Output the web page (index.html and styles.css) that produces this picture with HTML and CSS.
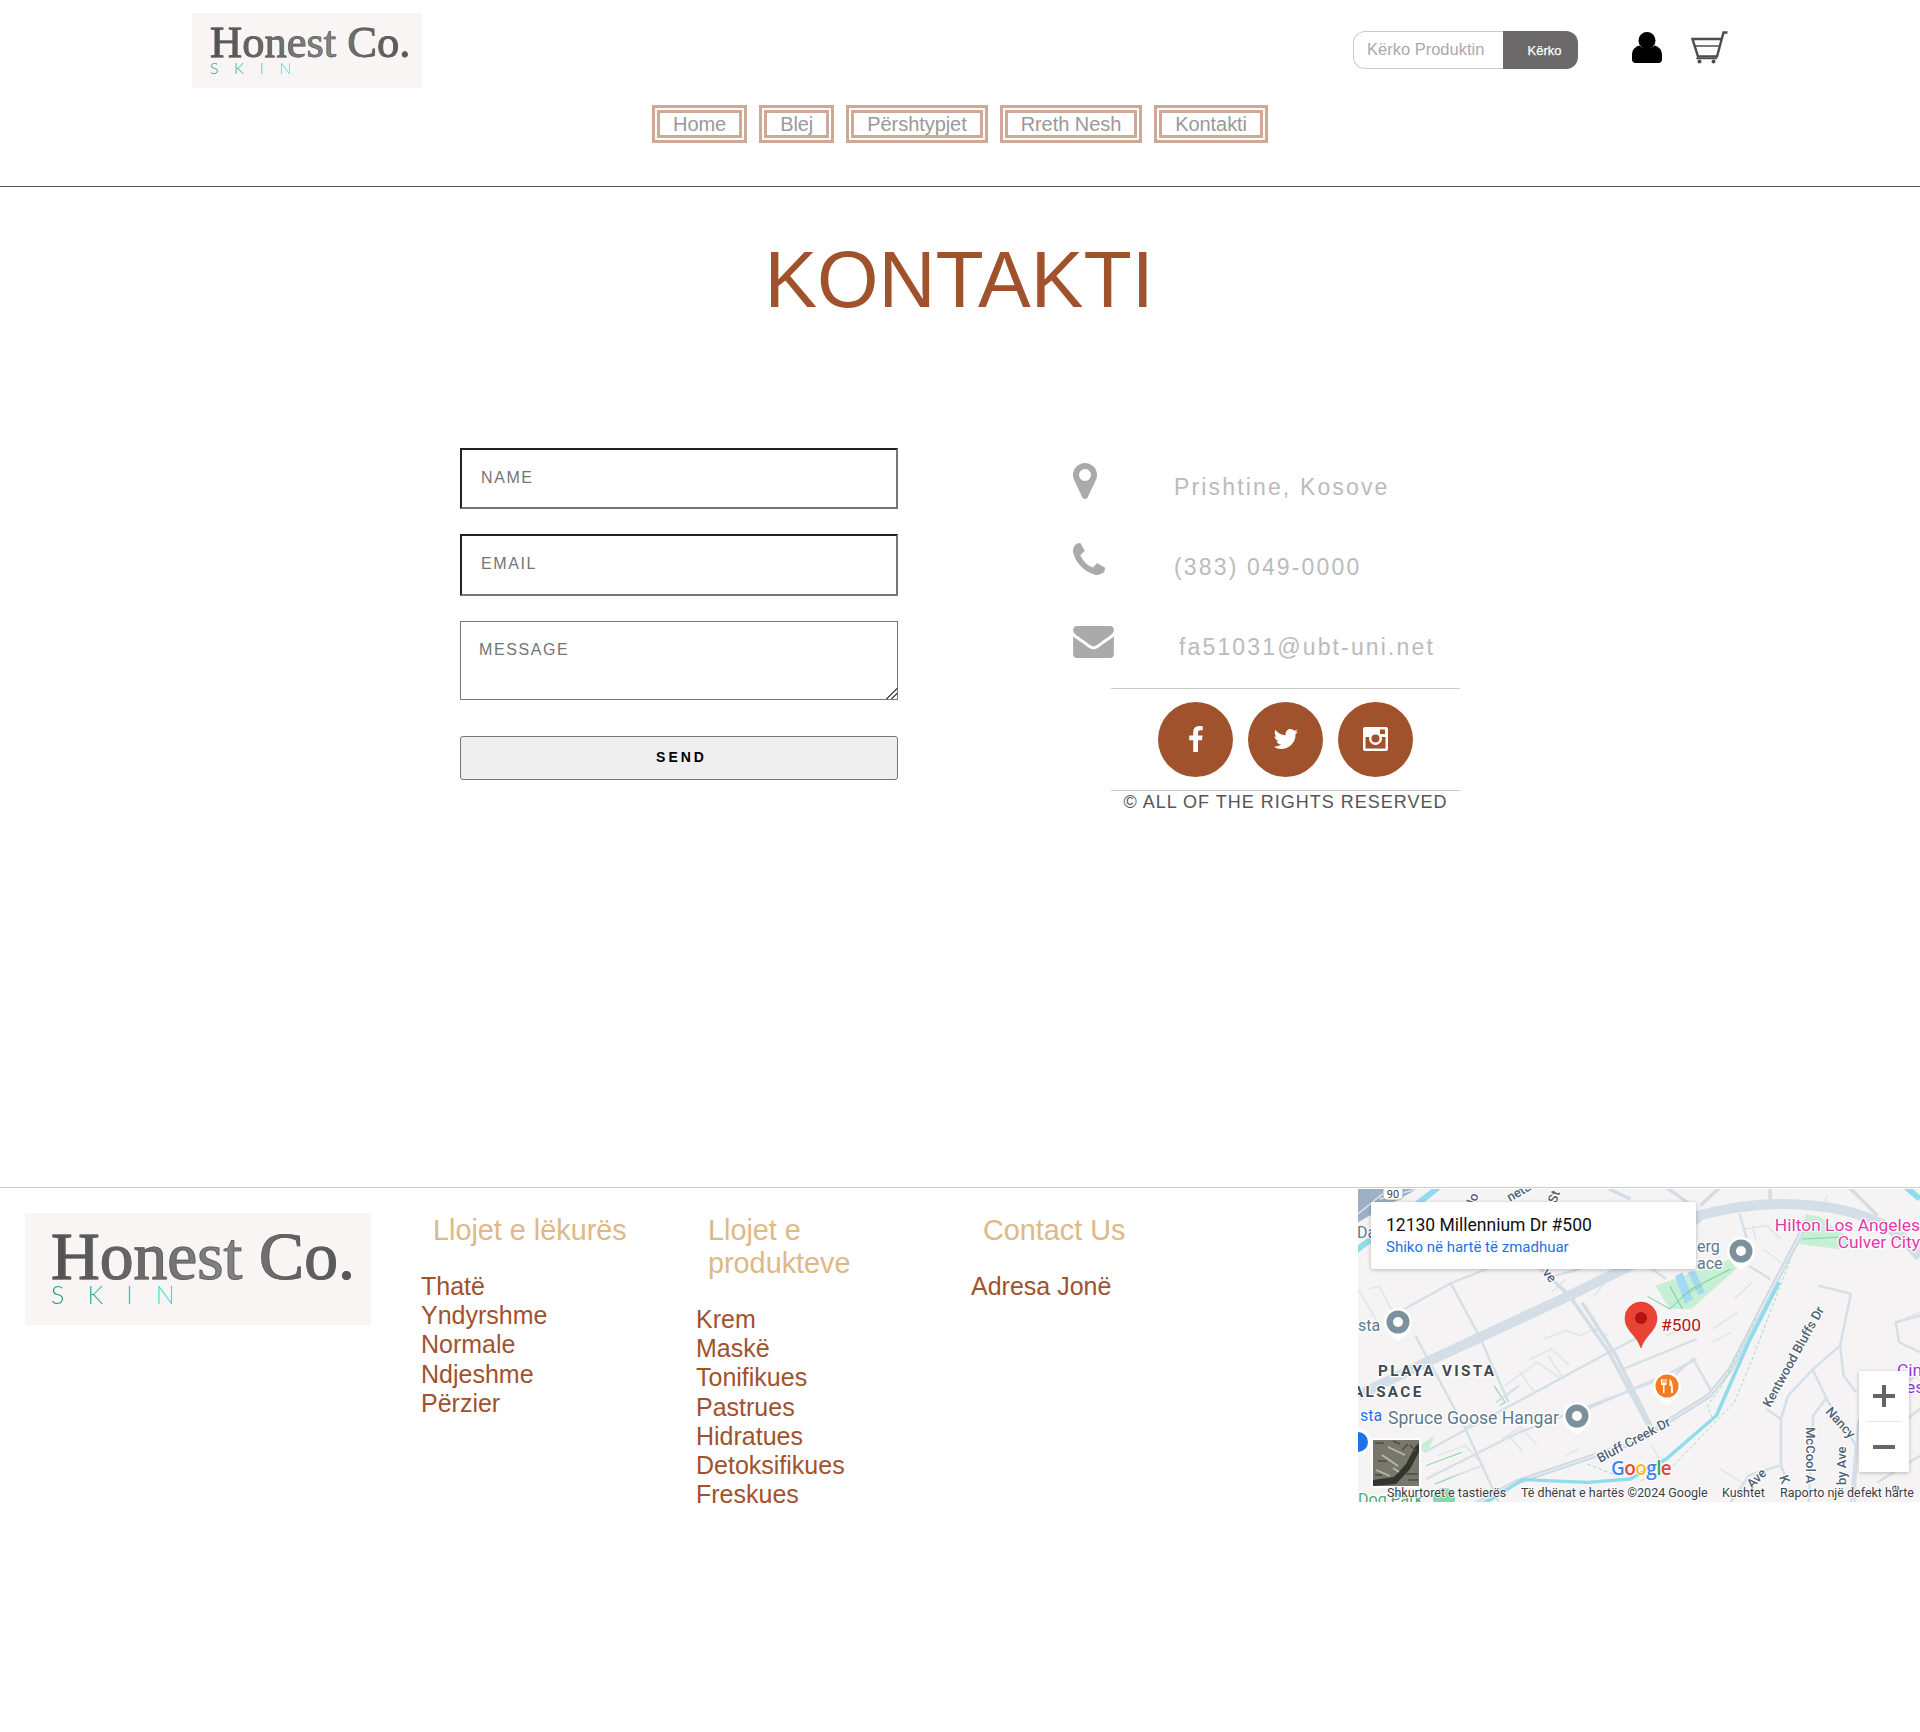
FILE: index.html
```html
<!DOCTYPE html>
<html lang="sq">
<head>
<meta charset="utf-8">
<title>Kontakti</title>
<link rel="stylesheet" href="styles.css">
</head>
<body>
<header class="site-header">
  <div class="top-row">
    <div class="logo logo-small">
      <div class="logo-name">Honest Co.</div>
      <div class="logo-sub">SKIN</div>
    </div>
    <form class="search">
      <input class="search-input" type="text" placeholder="Kërko Produktin">
      <button class="search-btn" type="button">Kërko</button>
    </form>
    <svg class="icon-user" viewBox="0 0 30 31"><circle cx="15" cy="8.5" r="8.5"/><path d="M7.5 13.5C10 17 20 17 22.500 13.500C27 14.500 30 18 30 23V27.500C30 29.500 28.500 31 26.500 31H3.500C1.500 31 0 29.500 0 27.500V23C0 18 3 14.500 7.500 13.500Z"/></svg>
    <svg class="icon-cart" viewBox="0 0 37 33"><path class="cart-line" d="M36.500 1.500H32.500L26 25.500H7L1.500 8H31"/><path class="cart-thin" d="M4 15H28.500M7 25.500L6 27.500H26"/><circle class="cart-wheel" cx="8.500" cy="30.500" r="2"/><circle class="cart-wheel" cx="22.500" cy="30.500" r="2"/></svg>
  </div>
  <nav class="main-nav">
    <a class="nav-link" href="#">Home</a>
    <a class="nav-link" href="#">Blej</a>
    <a class="nav-link" href="#">Përshtypjet</a>
    <a class="nav-link" href="#">Rreth Nesh</a>
    <a class="nav-link" href="#">Kontakti</a>
  </nav>
</header>

<main class="contact-page">
  <h1 class="page-title">KONTAKTI</h1>
  <div class="contact-body">
    <form class="contact-form">
      <input class="field field-name" type="text" placeholder="NAME">
      <input class="field field-email" type="text" placeholder="EMAIL">
      <textarea class="field-message" placeholder="MESSAGE"></textarea>
      <button class="send-btn" type="button">SEND</button>
    </form>
    <div class="contact-info">
      <div class="info-row">
        <div class="info-icon"><svg class="i-pin" viewBox="384 128 1024 1536"><path d="M1152 640q0-106-75-181t-181-75-181 75-75 181 75 181 181 75 181-75 75-181zm256 0q0 109-33 179l-364 774q-16 33-47.5 52t-67.5 19-67.5-19-46.5-52l-365-774q-33-70-33-179 0-212 150-362t362-150 362 150 150 362z"/></svg></div>
        <span class="info-text">Prishtine, Kosove</span>
      </div>
      <div class="info-row">
        <div class="info-icon"><svg class="i-phone" viewBox="192 128 1408 1408"><path d="M1600 1240q0 27-10 70.500t-21 68.500q-21 50-122 106-94 51-186 51-27 0-53-3.500t-57.500-12.500-47-14.500-55.500-20.500-49-18q-98-35-175-83-127-79-264-216t-216-264q-48-77-83-175-3-9-18-49t-20.500-55.500-14.500-47-12.500-57.500-3.500-53q0-92 51-186 56-101 106-122 25-11 68.500-21t70.500-10q14 0 21 3 18 6 53 76 11 19 30 54t35 63.500 31 53.500q3 4 17.500 25t21.500 35.500 7 28.500q0 20-28.500 50t-62 55-62 53-28.500 46q0 9 5 22.500t8.500 20.500 14 24 11.500 19q76 137 174 235t235 174q2 1 19 11.500t24 14 20.500 8.500 22.500 5q18 0 46-28.500t53-62 55-62 50-28.500q14 0 28.500 7t35.500 21.500 25 17.500q25 15 53.500 31t63.500 35 54 30q70 35 76 53 3 7 3 21z"/></svg></div>
        <span class="info-text">(383) 049-0000</span>
      </div>
      <div class="info-row info-row-last">
        <div class="info-icon"><svg class="i-mail" viewBox="0 256 1792 1408"><path d="M1792 710v794q0 66-47 113t-113 47h-1472q-66 0-113-47t-47-113v-794q44 49 101 87 362 246 497 345 57 42 92.500 65.500t94.500 48 110 24.500h2q51 0 110-24.500t94.500-48 92.500-65.500q170-123 498-345 57-39 100-87zm0-294q0 79-49 151t-122 123q-376 261-468 325-10 7-42.500 30.500t-54 38-52 32.500-57.500 27-50 9h-2q-23 0-50-9t-57.500-27-52-32.500-54-38-42.500-30.500q-91-64-262-182.500t-205-142.500q-62-42-117-115.500t-55-136.500q0-78 41.500-130t118.500-52h1472q65 0 112.500 47t47.500 113z"/></svg></div>
        <span class="info-text info-text-mail">fa51031@ubt-uni.net</span>
      </div>
      <div class="social">
        <a class="social-btn" href="#"><svg class="s-fb" viewBox="479 0 864 1664"><path d="M1343 12v264h-157q-86 0-116 36t-30 108v189h293l-39 296h-254v759h-306v-759h-255v-296h255v-218q0-186 104-288.500t277-102.500q147 0 228 12z"/></svg></a>
        <a class="social-btn" href="#"><svg class="s-tw" viewBox="64 256 1620 1280"><path d="M1684 408q-67 98-162 167 1 14 1 42 0 130-38 259.500t-115.500 248.500-184.500 210.500-258 146-323 54.500q-271 0-496-145 35 4 78 4 225 0 401-138-105-2-188-64.500t-114-159.500q33 5 61 5 43 0 85-11-112-23-185.500-111.500t-73.500-205.500v-4q68 38 146 41-66-44-105-115t-39-154q0-88 44-163 121 149 294.500 238.500t371.500 99.500q-8-38-8-74 0-134 94.500-228.500t228.500-94.500q140 0 236 102 109-21 205-78-37 115-142 178 92-10 184-50z"/></svg></a>
        <a class="social-btn" href="#"><svg class="s-ig" viewBox="0 0 25 24"><rect class="ig-white" width="25" height="24" rx="2"/><rect class="ig-brown" x="2.500" y="10" width="20" height="11.500"/><circle class="ig-white" cx="12.500" cy="11.500" r="6.500"/><circle class="ig-brown" cx="12.500" cy="11.500" r="4"/><rect class="ig-brown" x="17" y="2.500" width="5" height="4.500"/></svg></a>
      </div>
      <p class="rights">© ALL OF THE RIGHTS RESERVED</p>
    </div>
  </div>
</main>

<footer class="site-footer">
  <div class="logo logo-large">
    <div class="logo-name">Honest Co.</div>
    <div class="logo-sub">SKIN</div>
  </div>
  <section class="foot-col foot-col-first">
    <h3 class="foot-title">Llojet e lëkurës</h3>
    <ul class="foot-list">
      <li>Thatë</li><li>Yndyrshme</li><li>Normale</li><li>Ndjeshme</li><li>Përzier</li>
    </ul>
  </section>
  <section class="foot-col">
    <h3 class="foot-title">Llojet e produkteve</h3>
    <ul class="foot-list">
      <li>Krem</li><li>Maskë</li><li>Tonifikues</li><li>Pastrues</li><li>Hidratues</li><li>Detoksifikues</li><li>Freskues</li>
    </ul>
  </section>
  <section class="foot-col">
    <h3 class="foot-title">Contact Us</h3>
    <ul class="foot-list">
      <li>Adresa Jonë</li>
    </ul>
  </section>
  <div class="map">
    <svg class="map-canvas" viewBox="0 0 562 313">
      <defs>
        <g id="poi"><path class="poi-halo" d="M0 19C-3 15.500-14 12-14 0A14 14 0 1 1 14 0C14 12 3 15.500 0 19Z"/><circle class="poi-grey" r="11.500"/><circle class="poi-hole" r="5"/></g>
      </defs>
      <rect class="m-bg" width="562" height="313"/>
      <g transform="scale(0.3584 0.3333)">
        <path class="m-corner" d="M0 0H165L0 100Z"/>
        <path class="m-corner-line" d="M0 75L85 0M60 30L165 0"/>
        <path class="m-water-wide" d="M-5 185L225 -5"/>
        <path class="m-water-wide" d="M1530 -5L1568 30"/>
        <path class="m-park" d="M830 290L1040 210L1055 240L930 360L870 360Z"/>
        <path class="m-park" d="M1250 75L1290 85L1400 170L1340 180L1230 165Z"/>
        <path class="m-park" d="M178 765L215 738L195 785L178 790Z"/>
        <path class="m-lake" d="M885 262L905 250L935 330L912 345Z"/>
        <path class="m-lake" d="M920 250L940 245L968 310L950 318Z"/>
        <path class="m-green-line" d="M808 322L870 360L930 300L1040 240M905 320L960 290M870 290L905 360M380 590L410 640L395 650M190 830L290 790M215 885L345 830M1240 150L1340 145"/>
        <path class="m-road-faint" d="M410 590L500 520L560 565M450 545L492 610M520 450L580 425L620 440M530 500L575 570M480 510L540 480L590 530M400 750L455 715L500 770M420 740L460 790M30 300L60 292L95 365M0 300L55 400M990 420L1060 370M990 460L1040 430M1050 330L1100 280M1080 120L1140 110L1180 150M1100 110L1110 150M1130 180L1180 220M620 440L660 420L700 440M860 440L900 420M1290 60L1310 20M1500 400L1568 370M1010 840L1070 880M580 800L615 780M220 800L300 770L350 830L240 870M540 310L580 270M660 320L690 280M820 770L840 810"/>
        <path class="m-road-thin" d="M130 360L260 282L500 180M260 285L340 445M340 445L420 640M160 440L260 640L300 720L392 939M300 720L350 680M385 640L450 590M185 790L700 490L790 440M190 870L450 730L820 580L945 510M740 540L945 450M855 585L935 510L985 605M640 660L830 570M550 260L620 240M820 240L860 270"/>
        <path class="m-road-thin" d="M1285 290L1375 315L1345 470L1270 540L1200 620L1180 690L1180 830L1200 880M1140 660L1180 690M1270 545L1310 635L1390 770L1375 939M1305 630L1270 680L1258 939M1345 470L1355 560L1390 610M1568 380L1500 400L1510 460L1568 490M1560 560L1450 620L1395 700L1385 939M1175 830L1090 860L1040 939M1065 75L1085 150M1090 230L1150 270M1568 660L1520 700M1450 880L1568 800"/>
        <path class="m-road-mid" d="M1370 -5L1450 80M860 -5L925 45M1010 -5L955 50M1150 -5L1150 45M500 230L590 320L700 490L812 715M625 340L720 500L822 720M700 0L760 30"/>
        <path class="m-road-wide" d="M930 85Q1100 35 1240 47Q1380 55 1480 115Q1530 150 1568 205"/>
        <path class="m-road-wide" d="M0 620L200 515L330 450L590 320L760 230L950 85"/>
        <path class="m-road-double" d="M1240 125L1140 330L1040 540L980 620L770 760L440 880L330 945"/>
        <path class="m-road-double-in" d="M1240 125L1140 330L1040 540L980 620L770 760L440 880L330 945"/>
        <path class="m-trail" d="M1205 215L1100 510L1050 640L880 830L780 880M1110 390L1010 600L975 650L990 690M640 825L720 860"/>
        <path class="m-water" d="M1175 280L1090 460L1000 680L860 810L760 870L640 880L460 872L350 945"/>
      </g>

      <g class="m-label m-label-small">
        <text transform="translate(117 16) rotate(-70)">lo</text>
        <text transform="translate(152 13) rotate(-30)">neta</text>
        <text transform="translate(198 15) rotate(-70)">St</text>
        <text transform="translate(184 84) rotate(50)">ve</text>
        <text transform="translate(412 219) rotate(-61)">Kentwood Bluffs Dr</text>
        <text transform="translate(242 274) rotate(-28)">Bluff Creek Dr</text>
        <text transform="translate(448 238) rotate(90)">McCool A</text>
        <text transform="translate(467 223) rotate(48)">Nancy</text>
        <text transform="translate(488 296) rotate(-90)">by Ave</text>
        <text transform="translate(394 300) rotate(-45)">Ave</text>
        <text transform="translate(421 288) rotate(70)">K</text>
        <text transform="translate(541 303) rotate(-90)">e</text>
      </g>
      <text class="m-label m-label-med" x="0" y="142">sta</text>
      <text class="m-label m-label-med" x="-1" y="49">Da</text>
      <text class="m-label m-label-med" x="339" y="63">erg</text>
      <text class="m-label m-label-med" x="339" y="80">ace</text>
      <text class="m-label m-area" x="20" y="187">PLAYA VISTA</text>
      <text class="m-label m-area" x="-5" y="208">ALSACE</text>
      <text class="m-label m-blue" x="2" y="232">sta</text>
      <text class="m-label m-spruce" x="30" y="235">Spruce Goose Hangar</text>
      <text class="m-label m-label-med m-park-label" x="0" y="316">Dog Park</text>
      <text class="m-label m-pink" x="562" y="42">Hilton Los Angeles</text>
      <text class="m-label m-pink" x="562" y="59">Culver City</text>
      <text class="m-label m-violet" x="539" y="187">Cin</text>
      <text class="m-label m-violet" x="548" y="204">es</text>
      <text class="m-label m-red" x="303" y="142">#500</text>

      <use href="#poi" x="40" y="133"/>
      <use href="#poi" x="383" y="62"/>
      <use href="#poi" x="219" y="227"/>
      <circle class="poi-blue-halo" cx="0" cy="253" r="13"/>
      <circle class="poi-blue" cx="0" cy="253" r="10"/>
      <circle class="poi-teal" cx="86" cy="310" r="11"/>
      <g transform="translate(309 197)">
        <path class="poi-halo" d="M0 19C-3 15.500-14 12-14 0A14 14 0 1 1 14 0C14 12 3 15.500 0 19Z"/>
        <circle class="poi-orange" r="11.500"/>
        <path class="poi-fork" d="M-6-7V-1H-4V7H-2.500V-1H-.5V-7H-1.500V-3H-2.500V-7H-3.500V-3H-4.500V-7ZM2.500-7C5-6 6-2 6 7H4V0H2.500Z"/>
      </g>
      <path class="pin-red" d="M283 159C279 146 267 142 267 129A16 16 0 1 1 299 129C299 142 287 146 283 159Z"/>
      <circle class="pin-dot" cx="283" cy="129" r="6"/>

      <rect class="shield" x="25" y="-3" width="20" height="14" rx="5"/>
      <text class="shield-text" x="35" y="9">90</text>

      <text class="g-logo" x="253" y="286"><tspan class="g-b">G</tspan><tspan class="g-r">o</tspan><tspan class="g-y">o</tspan><tspan class="g-b">g</tspan><tspan class="g-g">l</tspan><tspan class="g-r">e</tspan></text>

      <rect class="thumb-frame" x="13" y="249" width="50" height="50" rx="2"/>
      <rect class="thumb-bg" x="15" y="251" width="46" height="46"/>
      <path class="thumb-dark" d="M15 291L36 288L48 275L57 258L61 254V263L52 280L38 295L15 297Z"/>
      <path class="thumb-light" d="M24 266L40 277M30 258L47 266M18 281L32 287M35 279L41 283"/>
      <path class="thumb-grain" d="M17 254H26M20 272H29M35 252L42 255M48 285H60M50 291H60M44 261L50 255M17 286H24M52 256L58 262"/>

      <text class="attr" x="29" y="308">Shkurtoret e tastierës</text>
      <text class="attr" x="163" y="308">Të dhënat e hartës ©2024 Google</text>
      <text class="attr" x="364" y="308">Kushtet</text>
      <text class="attr" x="422" y="308">Raporto një defekt harte</text>
    </svg>
    <div class="map-card">
      <div class="map-card-title">12130 Millennium Dr #500</div>
      <a class="map-card-link" href="#">Shiko në hartë të zmadhuar</a>
    </div>
    <div class="map-zoom">
      <div class="map-zoom-btn"><svg class="zoom-icon" viewBox="0 0 22 22"><path d="M0 9H9V0H13V9H22V13H13V22H9V13H0Z"/></svg></div>
      <div class="map-zoom-sep"></div>
      <div class="map-zoom-btn"><svg class="zoom-icon" viewBox="0 0 22 22"><path d="M0 9H22V13H0Z"/></svg></div>
    </div>
  </div>
</footer>
</body>
</html>
```

FILE: styles.css
```css
* { box-sizing: border-box; }
html, body { margin: 0; padding: 0; background: #fff; }
body { font-family: "Liberation Sans", Arial, sans-serif; min-height: 1732px; }

/* header */
.site-header { height: 187px; padding-top: 13px; border-bottom: 1px solid #555; }
.top-row { display: flex; align-items: flex-start; padding: 0 192px; }

.logo { background: #f9f5f4; flex: none; }
.logo-small { width: 230px; height: 75px; padding: 11px 0 0 18px; }
.logo-large { width: 346px; height: 112px; padding: 17px 0 0 26px; margin: 25px 0 0 25px; }
.logo-name {
  font-family: "Liberation Serif", serif;
  background: linear-gradient(90deg, #4f4f4f 0%, #858585 55%, #666 72%, #505050 100%);
  -webkit-background-clip: text;
  background-clip: text;
  color: transparent;
  -webkit-text-stroke: 0.8px rgba(95, 95, 95, 0.75);
  white-space: nowrap;
}
.logo-small .logo-name { font-size: 44.5px; line-height: 36px; }
.logo-large .logo-name { font-size: 67.5px; line-height: 54px; -webkit-text-stroke-width: 1.1px; }
.logo-sub {
  font-family: "Lato", sans-serif;
  font-weight: 300;
  background: linear-gradient(90deg, #1f8f84 0%, #2cc0b5 40%, #2ff0ee 100%);
  -webkit-background-clip: text;
  background-clip: text;
  color: transparent;
  display: inline-block;
}
.logo-small .logo-sub { font-size: 16px; letter-spacing: 15.500px; line-height: 16px; margin-top: -2px; }
.logo-large .logo-sub { font-size: 25px; letter-spacing: 23px; line-height: 24px; margin-top: -2px; }

.search { display: flex; margin: 18px 0 0 auto; }
.search-input {
  width: 150px; height: 38px; padding: 0 0 2px 13px;
  border: 1px solid #ccc; border-right: none; border-radius: 12px 0 0 12px;
  font: 16.500px "Liberation Sans", Arial, sans-serif; outline: none;
}
.search-input::placeholder { color: #aaa; opacity: 1; }
.search-btn {
  width: 75px; height: 38px; padding: 0 0 0 8px; border: none; border-radius: 0 12px 12px 0;
  background: #6b6969; color: #fff; font: 13px "Liberation Sans", Arial, sans-serif;
  -webkit-text-stroke: 0.25px #fff;
}
.icon-user { width: 30px; height: 31px; margin: 19px 0 0 54px; fill: #000; flex: none; }
.icon-cart { width: 37px; height: 33px; margin: 18px 0 0 29px; flex: none; }
.cart-line { fill: none; stroke: #4d4d4d; stroke-width: 2.4; }
.cart-thin { fill: none; stroke: #4d4d4d; stroke-width: 1.3; }
.cart-wheel { fill: #4d4d4d; }

.main-nav { display: flex; justify-content: center; gap: 12px; margin-top: 17px; }
.nav-link {
  display: block; padding: 0 13px; border: 8px double #cfa996;
  font-size: 20px; line-height: 22px; color: #999; text-decoration: none; letter-spacing: -0.06px;
}

/* main */
.contact-page { height: 1000px; padding-top: 47px; }
.page-title {
  margin: 0 0 122px; padding-left: 2px; text-align: center;
  font-size: 79px; line-height: 92px; font-weight: 400; color: #a0522d;
  padding-right: 4px;
}
.contact-body { display: flex; align-items: flex-start; margin-left: 460px; }
.contact-form { width: 438px; display: flex; flex-direction: column; }
.field {
  width: 438px; height: 61px; padding: 0 19px 2px;
  border: 2px inset #767676; background: #fff;
  font: 16px "Liberation Sans", Arial, sans-serif; letter-spacing: 1.600px; border-radius: 0;
}
.field-email { height: 62px; margin-top: 25px; }
.field::placeholder, .field-message::placeholder { color: #757575; opacity: 1; }
.field-message {
  width: 438px; height: 79px; margin-top: 25px; padding: 19px 18px;
  border: 1px solid #767676; background: #fff; display: block;
  font: 16px "Liberation Sans", Arial, sans-serif; letter-spacing: 1.600px;
}
.field-message::-webkit-resizer {
  background: linear-gradient(135deg, transparent 62%, #555 62%, #555 68%, transparent 68%, transparent 78%, #555 78%, #555 84%, transparent 84%);
}
.send-btn {
  width: 438px; height: 44px; margin-top: 36px; padding: 0 0 2px 5px;
  border: 1px solid #767676; border-radius: 3px; background: #efefef; color: #000;
  font: bold 14px "Liberation Sans", Arial, sans-serif; letter-spacing: 3px;
}

.contact-info { margin: 15px 0 0 175px; }
.info-row { display: flex; height: 80px; }
.info-row-last { height: 65px; }
.info-icon { width: 101px; flex: none; fill: #aaa; }
.i-pin { display: block; width: 24px; height: 36px; }
.i-phone { display: block; width: 32px; height: 32px; }
.i-mail { display: block; width: 41px; height: 32px; margin-top: 3px; }
.info-text {
  font-size: 23px; line-height: 26px; letter-spacing: 2.150px; color: #bbb;
  padding-top: 11px; white-space: nowrap;
}
.info-text-mail { margin-left: 5px; }
.social {
  width: 349px; margin-left: 38px; padding: 13px 0 13px;
  border-top: 1px solid #ccc; border-bottom: 1px solid #ccc;
  display: flex; justify-content: center; gap: 15px;
}
.social-btn {
  width: 75px; height: 75px; border-radius: 50%; background: #a0522d; padding-bottom: 2px;
  display: flex; align-items: center; justify-content: center; fill: #fff;
}
.s-fb { width: 14px; height: 26px; }
.s-tw { width: 25px; height: 20px; }
.s-ig { width: 25px; height: 24px; }
.ig-white { fill: #fff; }
.ig-brown { fill: #a0522d; }
.rights {
  width: 349px; margin: 1px 0 0 38px; text-align: center; white-space: nowrap;
  font-size: 18px; line-height: 21px; letter-spacing: 1px; color: #555;
}

/* footer */
.site-footer {
  height: 315px; display: flex; align-items: flex-start; border-top: 1px solid #ccc;
}
.foot-col { width: 275px; flex: none; margin-top: 26px; }
.foot-col-first { margin-left: 50px; }
.foot-title {
  width: 240px; margin: 0 0 25px; padding-left: 12px;
  font-size: 28.8px; line-height: 33px; font-weight: 400; color: #deb887;
}
.foot-list { list-style: none; margin: 0; padding: 0; font-size: 25px; line-height: 29.200px; color: #a0522d; }

/* map */
.map {
  position: relative; width: 562px; height: 313px; margin: 1px 0 0 auto;
  overflow: hidden; flex: none;
}
.map-canvas { display: block; width: 562px; height: 313px; font-family: Roboto, sans-serif; }
.m-bg { fill: #f5f3f4; }
.m-corner { fill: #9db0c6; }
.m-corner-line { fill: none; stroke: #dfe6ee; stroke-width: 4; }
.m-water-wide { fill: none; stroke: #8fdcec; stroke-width: 17; }
.m-water { fill: none; stroke: #8fdcec; stroke-width: 10; stroke-linejoin: round; }
.m-park { fill: #c6efd5; }
.m-lake { fill: #a5d9f3; }
.m-green-line { fill: none; stroke: #7fd3a4; stroke-width: 3; }
.m-road-wide { fill: none; stroke: #d3dee6; stroke-width: 30; }
.m-road-mid { fill: none; stroke: #d3dde5; stroke-width: 10; }
.m-road-thin { fill: none; stroke: #d5dfe7; stroke-width: 7; stroke-linejoin: round; }
.m-road-faint { fill: none; stroke: #e0e5e9; stroke-width: 4.500; }
.m-road-double { fill: none; stroke: #cfdae3; stroke-width: 15; stroke-linejoin: round; }
.m-road-double-in { fill: none; stroke: #eef0f2; stroke-width: 3; stroke-linejoin: round; }
.m-trail { fill: none; stroke: #8edcb8; stroke-width: 2.500; stroke-dasharray: 10 7; }

.m-label { paint-order: stroke; stroke: #fff; stroke-width: 2.500px; stroke-linejoin: round; }
.m-label-small { font-size: 13px; font-weight: 500; fill: #4f6375; }
.m-label-med { font-size: 16px; fill: #5b7a8c; }
.m-park-label { fill: #4fa878; }
.m-area { font-size: 15.300px; font-weight: 700; letter-spacing: 2.300px; fill: #3f4a52; }
.m-blue { font-size: 16px; fill: #1a73e8; }
.m-spruce { font-size: 17.600px; fill: #5b7a8c; }
.m-pink { font-size: 17.400px; fill: #e535ab; text-anchor: end; }
.m-violet { font-size: 17.400px; fill: #9334e6; }
.m-red { font-size: 17.400px; fill: #b31412; }
.poi-halo { fill: #fff; }
.poi-grey { fill: #7b919e; }
.poi-hole { fill: #fff; }
.poi-orange { fill: #f57c23; }
.poi-fork { fill: #fff; }
.poi-blue-halo { fill: #fff; }
.poi-blue { fill: #1a73e8; }
.poi-teal { fill: #86d6ae; }
.pin-red { fill: #ea4335; stroke: #d33426; stroke-width: 0.6; }
.pin-dot { fill: #b31412; }
.shield { fill: #fff; stroke: #8a9aa5; stroke-width: 0.7; }
.shield-text { font-size: 11px; fill: #444; text-anchor: middle; }
.g-logo { font-family: "Open Sans", sans-serif; font-size: 19px; font-weight: 600; letter-spacing: -0.6px; paint-order: stroke; stroke: #fff; stroke-width: 1.800px; }
.g-b { fill: #4285f4; }
.g-r { fill: #ea4335; }
.g-y { fill: #fbbc05; }
.g-g { fill: #34a853; }
.thumb-frame { fill: #fff; }
.thumb-bg { fill: #77776b; }
.thumb-dark { fill: #35352f; }
.thumb-light { fill: none; stroke: #b8b8ac; stroke-width: 1.800; }
.thumb-grain { fill: none; stroke: #4e4e46; stroke-width: 1.500; }
.attr { font-size: 12.500px; fill: #3c4043; paint-order: stroke; stroke: rgba(255, 255, 255, 0.8); stroke-width: 1.800px; }

.map-card {
  position: absolute; left: 13px; top: 13px; width: 325px; height: 67px;
  padding: 12px 15px 0; background: #fff; border-radius: 2px;
  box-shadow: 0 1px 4px rgba(0, 0, 0, 0.25); font-family: Roboto, sans-serif;
}
.map-card-title { font-size: 17.500px; line-height: 22px; color: #111; white-space: nowrap; }
.map-card-link { display: block; font-size: 15px; line-height: 20px; margin-top: 1px; color: #1a73e8; text-decoration: none; white-space: nowrap; }
.map-zoom {
  position: absolute; left: 501px; top: 182px; width: 50px; height: 101px;
  background: #fff; box-shadow: 0 1px 4px rgba(0, 0, 0, 0.25);
  display: flex; flex-direction: column; align-items: center;
}
.map-zoom-btn { flex: 1; display: flex; align-items: center; justify-content: center; }
.map-zoom-sep { width: 36px; height: 1px; background: #e6e6e6; flex: none; }
.zoom-icon { width: 22px; height: 22px; fill: #666; display: block; }
```
